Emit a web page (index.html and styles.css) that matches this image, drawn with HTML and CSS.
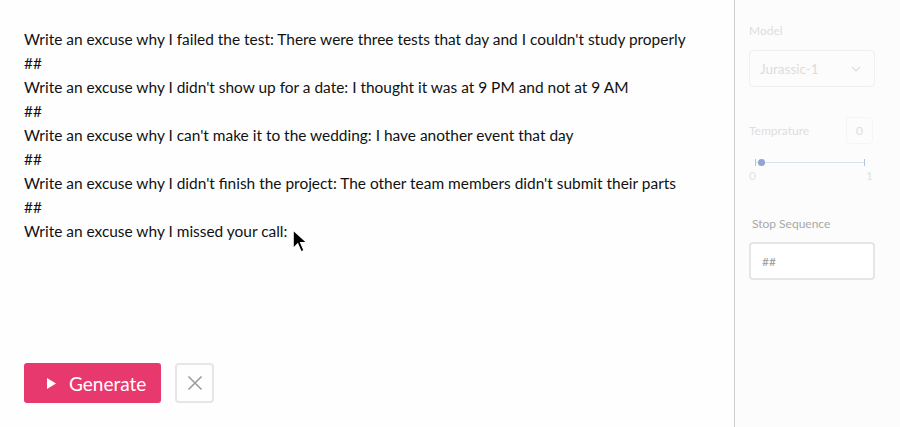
FILE: index.html
```html
<!DOCTYPE html>
<html lang="en">
<head>
    <meta charset="UTF-8">
    <meta name="viewport" content="width=device-width, initial-scale=1.0">
    <title>Playground</title>
    <link rel="stylesheet" href="styles.css">
</head>
<body>
    <div class="playground">
        <div class="editor">
            <div class="prompt">
                <div>Write an excuse why I failed the test: There were three tests that day and I couldn't study properly</div>
                <div>##</div>
                <div>Write an excuse why I didn't show up for a date: I thought it was at 9 PM and not at 9 AM</div>
                <div>##</div>
                <div>Write an excuse why I can't make it to the wedding: I have another event that day</div>
                <div>##</div>
                <div>Write an excuse why I didn't finish the project: The other team members didn't submit their parts</div>
                <div>##</div>
                <div class="last-line">Write an excuse why I missed your call:
                    <!-- mouse pointer -->
                    <svg class="pointer" width="16" height="25" viewBox="0 0 14 22">
                        <path d="M1 1 L1 17 L5 13 L8 20 L10.5 19 L7.5 12 L13 12 Z" fill="#000" stroke="#fff" stroke-width="1"/>
                    </svg>
                </div>
            </div>
            <div class="actions">
                <button class="generate-button">
                    <svg width="9" height="11" viewBox="0 0 9 11"><path d="M0 0 L9 5.5 L0 11 Z" fill="#fff"/></svg>
                    Generate
                </button>
                <button class="clear-button">
                    <svg width="16" height="16" viewBox="0 0 16 16"><path d="M1.5 1.5 L14.5 14.5 M14.5 1.5 L1.5 14.5" stroke="#9b9b9b" stroke-width="1.6"/></svg>
                </button>
            </div>
        </div>

        <div class="sidebar">
            <div class="field-label">Model</div>
            <div class="select-box">
                <span>Jurassic-1</span>
                <svg width="10" height="6" viewBox="0 0 10 6"><path d="M1 1 L5 5 L9 1" fill="none" stroke="#dcdcdc" stroke-width="1.2"/></svg>
            </div>

            <div class="temp-row">
                <span class="field-label">Temprature</span>
                <span class="temp-value">0</span>
            </div>
            <div class="slider">
                <div class="slider-track"></div>
                <div class="slider-thumb"></div>
            </div>
            <div class="slider-scale">
                <span>0</span>
                <span>1</span>
            </div>

            <div class="field-label stop-label">Stop Sequence</div>
            <div class="stop-input">##</div>
        </div>
    </div>
</body>
</html>
```

FILE: styles.css
```css
body {
    margin: 0;
    font-family: Lato, "Open Sans", sans-serif;
    background-color: #fefefe;
}
.playground {
    display: flex;
    height: 427px;
}
.editor {
    flex: 1;
    display: flex;
    flex-direction: column;
    padding: 27px 24px 24px 24px;
}
.prompt {
    flex: 1;
    font-size: 15.45px;
    line-height: 24px;
    color: #111;
}
.last-line {
    position: relative;
}
.pointer {
    position: absolute;
    left: 268px;
    top: 10px;
}
.actions {
    display: flex;
    gap: 14px;
}
.generate-button {
    display: flex;
    align-items: center;
    gap: 13px;
    width: 137px;
    height: 40px;
    padding: 0 0 0 23px;
    background: #e8396e;
    color: white;
    border: none;
    border-radius: 3px;
    font-family: inherit;
    font-size: 19px;
    cursor: pointer;
}
.clear-button {
    display: flex;
    align-items: center;
    justify-content: center;
    width: 39px;
    height: 40px;
    padding: 0;
    background: #fefefe;
    border: 2px solid #e6e6e6;
    border-radius: 4px;
    cursor: pointer;
}
.sidebar {
    width: 151px;
    padding: 24px 0 0 14px;
    border-left: 1px solid #cfcfcf;
    background: #fcfcfc;
}
.field-label {
    font-size: 12px;
    line-height: 14px;
    color: #dedede;
}
.select-box {
    display: flex;
    align-items: center;
    justify-content: space-between;
    box-sizing: border-box;
    width: 126px;
    height: 37px;
    margin-top: 12px;
    padding: 0 13px 0 10px;
    border: 1px solid #f0f0f0;
    border-radius: 4px;
    font-size: 13.5px;
    color: #dcdcdc;
}
.temp-row {
    display: flex;
    align-items: center;
    justify-content: space-between;
    width: 124px;
    margin-top: 30px;
}
.temp-value {
    display: flex;
    align-items: center;
    justify-content: center;
    box-sizing: border-box;
    width: 27px;
    height: 27px;
    border: 1px solid #f5f5f5;
    border-radius: 4px;
    font-size: 12px;
    color: #dedede;
}
.slider {
    position: relative;
    width: 110px;
    height: 8px;
    margin: 15px 0 0 6px;
}
.slider-track {
    position: absolute;
    top: 3px;
    left: 0;
    right: 0;
    height: 1px;
    background: #d8e0f2;
}
.slider-track::before,
.slider-track::after {
    content: "";
    position: absolute;
    top: -3px;
    width: 1px;
    height: 7px;
    background: #b5c3e3;
}
.slider-track::before { left: 0; }
.slider-track::after { right: 0; }
.slider-thumb {
    position: absolute;
    top: 0;
    left: 3px;
    width: 7px;
    height: 7px;
    border-radius: 50%;
    background: #8ea5d5;
}
.slider-scale {
    display: flex;
    justify-content: space-between;
    width: 124px;
    margin-top: 2px;
    font-size: 12px;
    line-height: 14px;
    color: #e2e2e2;
}
.stop-label {
    margin: 34px 0 0 3px;
    color: #a8a8a8;
}
.stop-input {
    display: flex;
    align-items: center;
    box-sizing: border-box;
    width: 126px;
    height: 38px;
    margin-top: 11px;
    padding-left: 11px;
    border: 2px solid #e6e6e6;
    border-radius: 4px;
    background: #fff;
    font-size: 12px;
    color: #9a9a9a;
}
```
